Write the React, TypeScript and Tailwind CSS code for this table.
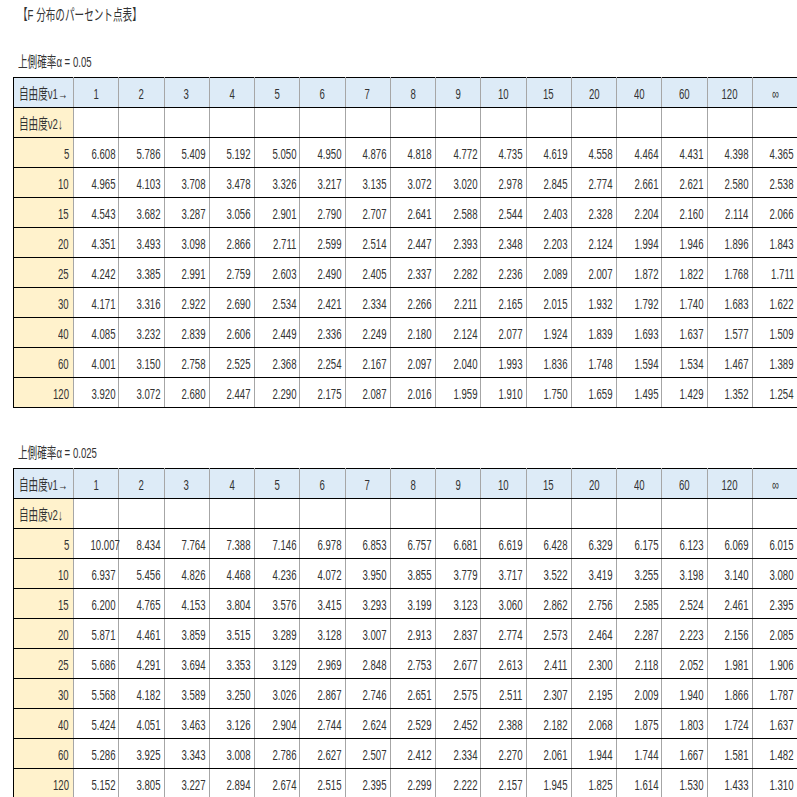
import React from "react";

const cols = ["1", "2", "3", "4", "5", "6", "7", "8", "9", "10", "15", "20", "40", "60", "120", "∞"];
const v2 = ["5", "10", "15", "20", "25", "30", "40", "60", "120"];

const table05 = [
  "6.608 5.786 5.409 5.192 5.050 4.950 4.876 4.818 4.772 4.735 4.619 4.558 4.464 4.431 4.398 4.365",
  "4.965 4.103 3.708 3.478 3.326 3.217 3.135 3.072 3.020 2.978 2.845 2.774 2.661 2.621 2.580 2.538",
  "4.543 3.682 3.287 3.056 2.901 2.790 2.707 2.641 2.588 2.544 2.403 2.328 2.204 2.160 2.114 2.066",
  "4.351 3.493 3.098 2.866 2.711 2.599 2.514 2.447 2.393 2.348 2.203 2.124 1.994 1.946 1.896 1.843",
  "4.242 3.385 2.991 2.759 2.603 2.490 2.405 2.337 2.282 2.236 2.089 2.007 1.872 1.822 1.768 1.711",
  "4.171 3.316 2.922 2.690 2.534 2.421 2.334 2.266 2.211 2.165 2.015 1.932 1.792 1.740 1.683 1.622",
  "4.085 3.232 2.839 2.606 2.449 2.336 2.249 2.180 2.124 2.077 1.924 1.839 1.693 1.637 1.577 1.509",
  "4.001 3.150 2.758 2.525 2.368 2.254 2.167 2.097 2.040 1.993 1.836 1.748 1.594 1.534 1.467 1.389",
  "3.920 3.072 2.680 2.447 2.290 2.175 2.087 2.016 1.959 1.910 1.750 1.659 1.495 1.429 1.352 1.254",
];

const table025 = [
  "10.007 8.434 7.764 7.388 7.146 6.978 6.853 6.757 6.681 6.619 6.428 6.329 6.175 6.123 6.069 6.015",
  "6.937 5.456 4.826 4.468 4.236 4.072 3.950 3.855 3.779 3.717 3.522 3.419 3.255 3.198 3.140 3.080",
  "6.200 4.765 4.153 3.804 3.576 3.415 3.293 3.199 3.123 3.060 2.862 2.756 2.585 2.524 2.461 2.395",
  "5.871 4.461 3.859 3.515 3.289 3.128 3.007 2.913 2.837 2.774 2.573 2.464 2.287 2.223 2.156 2.085",
  "5.686 4.291 3.694 3.353 3.129 2.969 2.848 2.753 2.677 2.613 2.411 2.300 2.118 2.052 1.981 1.906",
  "5.568 4.182 3.589 3.250 3.026 2.867 2.746 2.651 2.575 2.511 2.307 2.195 2.009 1.940 1.866 1.787",
  "5.424 4.051 3.463 3.126 2.904 2.744 2.624 2.529 2.452 2.388 2.182 2.068 1.875 1.803 1.724 1.637",
  "5.286 3.925 3.343 3.008 2.786 2.627 2.507 2.412 2.334 2.270 2.061 1.944 1.744 1.667 1.581 1.482",
  "5.152 3.805 3.227 2.894 2.674 2.515 2.395 2.299 2.222 2.157 1.945 1.825 1.614 1.530 1.433 1.310",
];

// narrow text, like the squeezed spreadsheet font
const Narrow = ({ children, align }: { children: React.ReactNode; align: "left" | "center" | "right" }) => {
  const origin = align === "left" ? "origin-left" : align === "right" ? "origin-right" : "origin-center";
  return <span className={`inline-block whitespace-nowrap scale-x-[0.64] ${origin}`}>{children}</span>;
};

const cell = "h-[30px] p-0 pt-[3px] border-y border-y-black border-x border-x-[#a6a6a6]";

const FTable = ({ rows }: { rows: string[] }) => (
  <table className="table-fixed border-collapse w-[784px] text-[15px] leading-[18px] text-[#333]">
    <colgroup>
      <col className="w-[60px]" />
      {cols.map((c) => (
        <col key={c} className="w-[45.25px]" />
      ))}
    </colgroup>
    <tbody>
      <tr className="bg-[#ddebf7]">
        <td className={`${cell} border-l-black pl-[5px] text-left`}>
          <Narrow align="left">自由度ν1→</Narrow>
        </td>
        {cols.map((c) => (
          <td key={c} className={`${cell} text-center`}>
            <Narrow align="center">{c}</Narrow>
          </td>
        ))}
      </tr>
      <tr>
        <td className={`${cell} border-l-black bg-[#fff2cc] pl-[5px] text-left`}>
          <Narrow align="left">自由度ν2↓</Narrow>
        </td>
        {cols.map((c) => (
          <td key={c} className={cell}></td>
        ))}
      </tr>
      {rows.map((r, i) => (
        <tr key={v2[i]}>
          <td className={`${cell} border-l-black bg-[#fff2cc] pr-[4px] text-right`}>
            <Narrow align="right">{v2[i]}</Narrow>
          </td>
          {r.split(" ").map((v, j) => (
            <td key={j} className={`${cell} pr-[3px] text-right`}>
              <Narrow align="right">{v}</Narrow>
            </td>
          ))}
        </tr>
      ))}
    </tbody>
  </table>
);

export default function App() {
  return (
    <div
      className="w-[797px] h-[797px] overflow-hidden bg-white pl-[13px] text-[#333]"
      style={{ fontFamily: '"Liberation Sans", "Noto Sans CJK JP", sans-serif' }}
    >
      <div className="mt-[6px] h-[18px] leading-[18px] text-[15px] pl-[5px]">
        <Narrow align="left">【F 分布のパーセント点表】</Narrow>
      </div>
      <div className="mt-[29px] mb-[6px] h-[18px] leading-[18px] text-[15px] pl-[5px]">
        <Narrow align="left">上側確率α = 0.05</Narrow>
      </div>
      <FTable rows={table05} />
      <div className="mt-[36px] mb-[6px] h-[18px] leading-[18px] text-[15px] pl-[5px]">
        <Narrow align="left">上側確率α = 0.025</Narrow>
      </div>
      <FTable rows={table025} />
    </div>
  );
}
